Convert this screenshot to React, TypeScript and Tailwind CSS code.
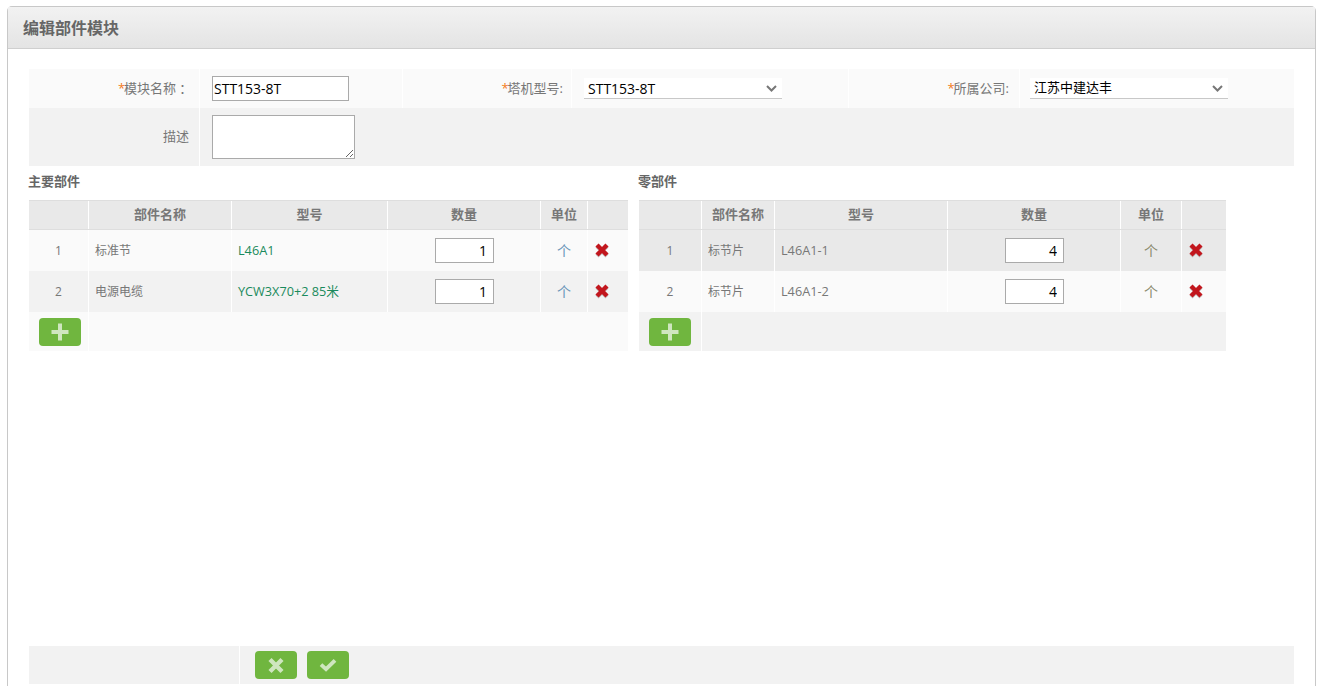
import React from 'react';

const fontStack = { fontFamily: '"Open Sans", "Noto Sans CJK SC", sans-serif' };

const Plus = () => (
  <svg width="18" height="18" viewBox="0 0 18 18">
    <path d="M7 0.5h4v6.5h6.5v4H11v6.5H7V11H0.5V7H7z" fill="#cfe6bf" />
  </svg>
);

const Cross = () => (
  <svg width="18" height="17" viewBox="0 0 18 17">
    <path d="M3 2.5l12 12M15 2.5l-12 12" fill="none" stroke="#cfe6bf" strokeWidth="4.4" />
  </svg>
);

const Check = () => (
  <svg width="18" height="14" viewBox="0 0 18 14">
    <path d="M2 6.6l5 4.6 9-8.8" fill="none" stroke="#cfe6bf" strokeWidth="3.8" />
  </svg>
);

const Chevron = () => (
  <svg width="11" height="7" viewBox="0 0 11 7" className="absolute right-[5px] top-[7px]">
    <path d="M1 1l4.5 4.5L10 1" fill="none" stroke="#777" strokeWidth="2" />
  </svg>
);

const RedCross = () => (
  <svg width="14" height="15" viewBox="0 0 14 15">
    <path d="M2 3l10 10M12 3L2 13" fill="none" stroke="#999" strokeOpacity="0.55" strokeWidth="4.4" />
    <path d="M2 2l10 10M12 2L2 12" fill="none" stroke="#c2161d" strokeWidth="4.4" />
  </svg>
);

const GreenButton = ({ children }: { children: React.ReactNode }) => (
  <button className="flex h-[28px] w-[42px] items-center justify-center rounded-[4px] bg-[#70b63f]">{children}</button>
);

const SelectBox = ({ value, textSize }: { value: string; textSize: string }) => (
  <div className="relative h-[21px] w-[198px] border-b border-[#c8c8c8] bg-white">
    <select
      defaultValue={value}
      className={`-mt-[3px] block h-[26px] w-full appearance-none bg-transparent pl-[4px] text-black outline-none ${textSize}`}
      style={fontStack}
    >
      <option>{value}</option>
    </select>
    <Chevron />
  </div>
);

const Label = ({ text, pad }: { text: string; pad: string }) => (
  <div className={`flex items-center justify-end border-r border-white text-[13px] text-[#777] ${pad}`}>
    <span className="w-[6px] text-[#f47b20]">*</span>
    {text}
  </div>
);

type Part = { name: string; model: string; qty: string };

const PartsTable = ({
  title,
  cols,
  parts,
  rowBgs,
  footBg,
  modelColor,
  unitColor,
  inputMargin,
}: {
  title: string;
  cols: string;
  parts: Part[];
  rowBgs: string[];
  footBg: string;
  modelColor: string;
  unitColor: string;
  inputMargin: string;
}) => {
  const heads = ['', '部件名称', '型号', '数量', '单位', ''];
  return (
    <div>
      <div className="-ml-px h-[34px] pt-[7px] text-[13px] leading-4 font-bold text-[#666]">{title}</div>
      <div className={`grid h-[30px] border-y border-[#dedede] bg-[#e9e9e9] ${cols}`}>
        {heads.map((h, i) => (
          <div key={i} className="flex items-center justify-center border-r border-white text-[13px] font-bold text-[#777] last:border-r-0">
            {h}
          </div>
        ))}
      </div>
      {parts.map((p, i) => (
        <div key={i} className={`grid h-[41px] text-[12px] ${cols} ${rowBgs[i]}`}>
          <div className="flex items-center justify-center border-r border-white text-[#777]">{i + 1}</div>
          <div className="flex items-center border-r border-white pl-[6px] text-[#777]">{p.name}</div>
          <div className={`flex items-center border-r border-white pl-[6px] text-[12.7px] ${modelColor}`}>{p.model}</div>
          <div className={`flex items-center border-r border-white ${inputMargin}`}>
            <input
              defaultValue={p.qty}
              className="h-[25px] w-[59px] border border-[#aaa] bg-white pr-[6px] text-right text-[14px] text-black outline-none"
              style={fontStack}
            />
          </div>
          <div className={`flex items-center justify-center border-r border-white text-[14px] ${unitColor}`}>个</div>
          <div className="flex items-center pl-[7px]">
            <RedCross />
          </div>
        </div>
      ))}
      <div className={`grid h-[39px] ${cols} ${footBg}`}>
        <div className="flex items-start border-r border-white pt-[6px] pl-[10px]">
          <GreenButton>
            <Plus />
          </GreenButton>
        </div>
      </div>
    </div>
  );
};

const App = () => {
  return (
    <div className="h-[686px] overflow-hidden bg-white pt-[6px] pr-[6px] pl-[7px]" style={fontStack}>
      <div className="flex h-[680px] flex-col rounded-t-[5px] border border-b-0 border-[#c8c8c8]">
        <div className="flex h-[42px] shrink-0 items-center border-b border-[#cfcfcf] bg-gradient-to-b from-[#f2f2f2] to-[#e4e4e4] pl-[15px] text-[16px] font-bold text-[#666]">
          编辑部件模块
        </div>

        <div className="flex flex-1 flex-col px-[21px] pt-[20px] pb-[2px]">
          {/* edit form */}
          <div className="grid h-[39px] grid-cols-[171px_203px_169px_277px_171px_1fr] bg-[#fafafa]">
            <div className="flex items-center justify-end border-r border-white pr-[10px] text-[13px] text-[#777]">
              <span className="w-[6px] text-[#f47b20]">*</span>
              模块名称
              <span className="w-[13px]" style={{ fontFamily: '"Noto Sans CJK TC", sans-serif' }}>：</span>
            </div>
            <div className="flex items-center border-r border-white pl-[12px]">
              <input
                defaultValue="STT153-8T"
                className="h-[25px] w-[137px] border border-[#aaa] bg-white pl-px text-[14px] text-black outline-none"
                style={fontStack}
              />
            </div>
            <Label text="塔机型号:" pad="pr-[8px]" />
            <div className="flex items-center border-r border-white pl-[12px]">
              <SelectBox value="STT153-8T" textSize="text-[14px]" />
            </div>
            <Label text="所属公司:" pad="pr-[10px]" />
            <div className="flex items-center pl-[10px]">
              <SelectBox value="江苏中建达丰" textSize="text-[13px]" />
            </div>
          </div>
          <div className="grid h-[58px] grid-cols-[171px_1fr] bg-[#f2f2f2]">
            <div className="flex items-center justify-end border-r border-white pr-[10px] text-[13px] text-[#777]">描述</div>
            <div className="flex items-center pl-[12px]">
              <textarea className="h-[44px] w-[143px] border border-[#aaa] bg-white outline-none" />
            </div>
          </div>

          {/* parts tables */}
          <div className="flex gap-[11px]">
            <PartsTable
              title="主要部件"
              cols="grid-cols-[60px_143px_156px_153px_47px_40px] w-[599px]"
              parts={[
                { name: '标准节', model: 'L46A1', qty: '1' },
                { name: '电源电缆', model: 'YCW3X70+2 85米', qty: '1' },
              ]}
              rowBgs={['bg-[#fafafa]', 'bg-[#f2f2f2]']}
              footBg="bg-[#fafafa]"
              modelColor="text-[#1a8a5c]"
              unitColor="text-[#6a96b8]"
              inputMargin="pl-[47px]"
            />
            <PartsTable
              title="零部件"
              cols="grid-cols-[63px_73px_173px_173px_61px_44px] w-[587px]"
              parts={[
                { name: '标节片', model: 'L46A1-1', qty: '4' },
                { name: '标节片', model: 'L46A1-2', qty: '4' },
              ]}
              rowBgs={['bg-[#e9e9e9]', 'bg-[#fafafa]']}
              footBg="bg-[#f2f2f2]"
              modelColor="text-[#777]"
              unitColor="text-[#8a8a6c]"
              inputMargin="pl-[57px]"
            />
          </div>

          {/* bottom actions */}
          <div className="mt-auto grid h-[38px] grid-cols-[211px_1fr] bg-[#f2f2f2]">
            <div className="border-r border-white" />
            <div className="flex items-center gap-[10px] pl-[15px]">
              <GreenButton>
                <Cross />
              </GreenButton>
              <GreenButton>
                <Check />
              </GreenButton>
            </div>
          </div>
        </div>
      </div>
    </div>
  );
};

export default App;
